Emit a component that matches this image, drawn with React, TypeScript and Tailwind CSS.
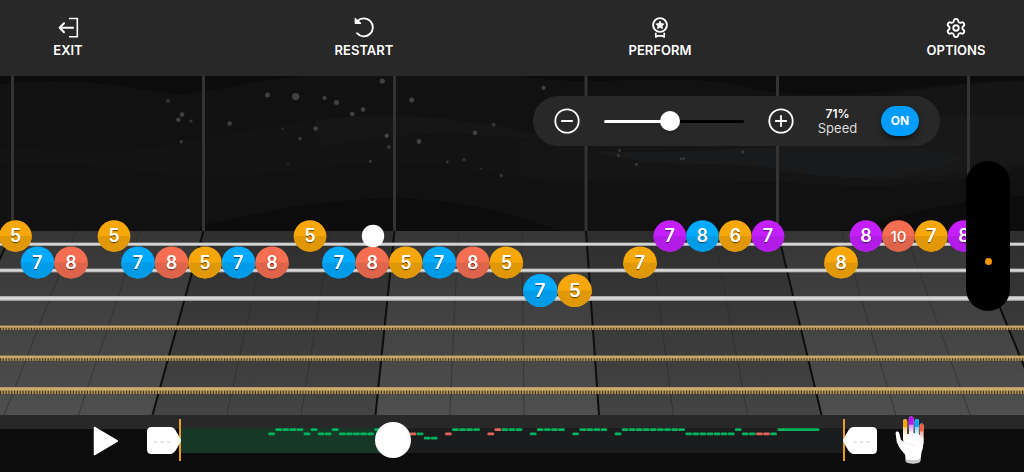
import { useState } from "react";
import type { ReactNode } from "react";
import { Settings } from "lucide-react";

type NoteColor = "yellow" | "blue" | "red" | "purple";

interface Note {
  x: number;
  row: 0 | 1 | 2;
  fret: number;
  color: NoteColor;
}

const COLORS: Record<NoteColor, { top: string; bottom: string }> = {
  yellow: { top: "#f7a70a", bottom: "#e09806" },
  blue: { top: "#00abff", bottom: "#009be6" },
  red: { top: "#f66e51", bottom: "#de644b" },
  purple: { top: "#c61fff", bottom: "#b31ce6" },
};

const ROWS = [
  { y: 160, rx: 16.3, ry: 15.7, size: 18 },
  { y: 186.5, rx: 16.8, ry: 15.9, size: 18 },
  { y: 214.5, rx: 17.2, ry: 16.4, size: 19 },
];

const NOTES: Note[] = [
  { x: 15.5, row: 0, fret: 5, color: "yellow" },
  { x: 114, row: 0, fret: 5, color: "yellow" },
  { x: 310, row: 0, fret: 5, color: "yellow" },
  { x: 669.8, row: 0, fret: 7, color: "purple" },
  { x: 702.5, row: 0, fret: 8, color: "blue" },
  { x: 735.2, row: 0, fret: 6, color: "yellow" },
  { x: 768, row: 0, fret: 7, color: "purple" },
  { x: 866, row: 0, fret: 8, color: "purple" },
  { x: 898.5, row: 0, fret: 10, color: "red" },
  { x: 931.2, row: 0, fret: 7, color: "yellow" },
  { x: 964, row: 0, fret: 8, color: "purple" },
  { x: 37.5, row: 1, fret: 7, color: "blue" },
  { x: 71, row: 1, fret: 8, color: "red" },
  { x: 138, row: 1, fret: 7, color: "blue" },
  { x: 171.5, row: 1, fret: 8, color: "red" },
  { x: 205, row: 1, fret: 5, color: "yellow" },
  { x: 238.5, row: 1, fret: 7, color: "blue" },
  { x: 272, row: 1, fret: 8, color: "red" },
  { x: 339, row: 1, fret: 7, color: "blue" },
  { x: 372.3, row: 1, fret: 8, color: "red" },
  { x: 405.8, row: 1, fret: 5, color: "yellow" },
  { x: 439.3, row: 1, fret: 7, color: "blue" },
  { x: 472.8, row: 1, fret: 8, color: "red" },
  { x: 506.3, row: 1, fret: 5, color: "yellow" },
  { x: 640, row: 1, fret: 7, color: "yellow" },
  { x: 841, row: 1, fret: 8, color: "yellow" },
  { x: 540.3, row: 2, fret: 7, color: "blue" },
  { x: 574.7, row: 2, fret: 5, color: "yellow" },
];

const DUST = [
  [168, 25, 2], [182, 38.5, 2.3], [178.3, 43.7, 2.2], [191, 45, 1.6], [181.3, 65.7, 1.9],
  [229.7, 47.5, 2.3], [267.5, 19, 2.5], [295.7, 20.6, 3.6], [324.5, 22, 2.1], [336.5, 26.5, 2.5],
  [382.3, 5, 2.6], [411.7, 24, 2.5], [352.3, 38, 2.3], [363, 33.5, 2.3], [315.7, 52.5, 2.2],
  [300, 62.7, 1.9], [282.5, 52.5, 1], [386.7, 59.7, 2.2], [388.7, 71, 2], [419, 65.5, 2.4],
  [475, 56.8, 2.2], [493.7, 48.7, 2], [370.3, 85.4, 1.7], [288, 88.5, 0.9], [447.3, 86, 1.4],
  [464, 83.5, 1.6], [481.3, 92.5, 1], [501.3, 99.5, 1.7], [543.5, 11.8, 2.1], [619.7, 74.5, 1.4],
  [618.3, 79.5, 1.4], [636.3, 88.3, 1.6], [681, 82.8, 1.5], [684, 82.5, 1.3], [742.7, 76, 1.7],
];

const TOP_X = [12.5, 203.5, 394.5, 586, 777.5, 968.5];
const BOTTOM_X = [-70, 152.5, 375.5, 599, 821.5, 1044];

// [slot, row, count, missed]
const SONG_MAP: [number, number, number, boolean?][] = [
  [0, 1, 1], [1, 0, 4], [5, 1, 1], [6, 0, 1], [7, 1, 2], [9, 0, 1], [10, 1, 5], [15, 0, 1],
  [20, 1, 1, true], [21, 1, 1], [22, 2, 2], [25, 1, 1, true], [26, 0, 4], [31, 1, 1, true],
  [32, 0, 1, true], [33, 0, 3], [37, 1, 1], [38, 0, 4], [43, 1, 1], [44, 0, 4], [49, 1, 1],
  [50, 0, 9], [59, 1, 7], [66, 0, 1], [67, 1, 2], [69, 1, 2, true], [71, 1, 1],
];

function HeaderButton({ label, children }: { label: string; children: ReactNode }) {
  return (
    <button type="button" className="flex w-24 flex-col items-center text-[13px] leading-5 font-semibold">
      <span className="flex h-6 w-6 items-center justify-center">{children}</span>
      {label}
    </button>
  );
}

function Wound({ y, h }: { y: number; h: number }) {
  return (
    <g>
      <rect x="0" y={y} width="1024" height={h} fill="#b8975d" />
      <rect x="0" y={y + h * 0.15} width="1024" height={h * 0.25} fill="#cdb077" />
      <line
        x1="0"
        x2="1024"
        y1={y + h * 0.76}
        y2={y + h * 0.76}
        stroke="#3f3521"
        strokeWidth={h * 0.48}
        strokeDasharray="1.2 1.6"
      />
    </g>
  );
}

function Fretboard() {
  const lanes = TOP_X.slice(0, -1).map((x, i) => ({
    points: `${x},155 ${TOP_X[i + 1]},155 ${BOTTOM_X[i + 1]},339 ${BOTTOM_X[i]},339`,
    light: i % 2 === 0,
  }));

  return (
    <svg viewBox="0 0 1024 339" className="block h-auto w-full" role="img" aria-label="Note highway">
      <defs>
        <linearGradient id="laneLight" x1="0" y1="155" x2="0" y2="339" gradientUnits="userSpaceOnUse">
          <stop offset="0" stopColor="#363636" />
          <stop offset="1" stopColor="#4f4f4f" />
        </linearGradient>
        <linearGradient id="laneDark" x1="0" y1="155" x2="0" y2="339" gradientUnits="userSpaceOnUse">
          <stop offset="0" stopColor="#2e2e2e" />
          <stop offset="1" stopColor="#444444" />
        </linearGradient>
        <linearGradient id="steel" x1="0" y1="0" x2="0" y2="1">
          <stop offset="0" stopColor="#9c9c9c" />
          <stop offset="0.35" stopColor="#dedede" />
          <stop offset="0.65" stopColor="#d2d2d2" />
          <stop offset="1" stopColor="#858585" />
        </linearGradient>
        <filter id="digitShadow" x="-30%" y="-30%" width="160%" height="180%">
          <feDropShadow dx="0" dy="1.2" stdDeviation="0.7" floodColor="#000" floodOpacity="0.5" />
        </filter>
      </defs>

      {/* Backdrop */}
      <rect width="1024" height="339" fill="#0c0c0c" />
      <path
        d="M0 8C60 1 110 7 178 19C230 13 270 0 320 0H520C600 14 680 -8 760 14C850 28 900 8 1024 4V120C960 122 900 140 840 155H560C430 105 330 120 200 150V155H0Z"
        fill="#111111"
      />
      <path
        d="M0 70C60 76 100 78 150 72C250 55 320 38 390 39C460 40 520 52 580 64V108C480 100 440 84 370 86C290 94 240 104 180 100C110 92 60 84 0 89Z"
        fill="#131313"
      />
      <path d="M315 45C380 35 460 40 540 60V66C450 50 380 60 321 71Z" fill="#161616" />
      <path
        d="M520 64C640 74 780 52 860 24C920 12 980 6 1024 5V92C940 112 860 112 780 106C660 104 600 108 520 99Z"
        fill="#151515"
      />
      <path d="M780 70C860 60 900 44 940 40C970 38 1000 38 1024 40V86C950 104 850 108 780 94Z" fill="#181818" />
      <path d="M595 75C660 78 720 74 780 70C860 66 920 68 966 82C930 100 850 108 780 94C720 82 660 96 595 75Z" fill="#191a1c" />
      {DUST.map(([x, y, r]) => (
        <circle key={`${x}-${y}`} cx={x} cy={y} r={r} fill="#6a6a6a" opacity={r > 2 ? 0.55 : 0.4} />
      ))}
      {TOP_X.map((x) => (
        <rect key={x} x={x - 1.5} y="0" width="3" height="155" fill="#333333" />
      ))}

      {/* Lanes */}
      <rect y="155" width="1024" height="184" fill="url(#laneDark)" />
      {lanes.map((lane) => (
        <polygon key={lane.points} points={lane.points} fill={lane.light ? "url(#laneLight)" : "url(#laneDark)"} />
      ))}
      {TOP_X.map((x, i) => (
        <g key={x}>
          {[1, 2].map((n) => (
            <line
              key={n}
              x1={x + n * 63.7}
              y1="155"
              x2={BOTTOM_X[i] + n * 74.3}
              y2="339"
              stroke="#2a2a2a"
              strokeWidth="0.8"
              opacity="0.75"
            />
          ))}
          <line x1={x} y1="155" x2={BOTTOM_X[i]} y2="339" stroke="#0d0d0d" strokeWidth="2" />
        </g>
      ))}

      {/* Strings */}
      <rect y="166.5" width="1024" height="3.5" fill="url(#steel)" />
      <rect y="192.5" width="1024" height="4" fill="url(#steel)" />
      <rect y="220" width="1024" height="5" fill="url(#steel)" />
      <Wound y={249.5} h={4.5} />
      <Wound y={279.5} h={5.3} />
      <Wound y={311} h={7} />

      {/* Notes */}
      {NOTES.map((note) => {
        const { y, rx, ry, size } = ROWS[note.row];
        const color = COLORS[note.color];
        return (
          <g key={`${note.x}-${note.row}`}>
            <ellipse cx={note.x} cy={y} rx={rx} ry={ry} fill={color.top} />
            <path d={`M${note.x - rx} ${y}A${rx} ${ry} 0 0 0 ${note.x + rx} ${y}Z`} fill={color.bottom} />
            <text
              x={note.x}
              y={y + 6}
              textAnchor="middle"
              fill="#fff"
              fontSize={note.fret > 9 ? 15 : size}
              fontWeight={note.fret > 9 ? 500 : 600}
              filter="url(#digitShadow)"
            >
              {note.fret}
            </text>
          </g>
        );
      })}
      <circle cx="373" cy="160" r="11.2" fill="#fff" />
    </svg>
  );
}

function SpeedControl() {
  const [speed, setSpeed] = useState(71);
  const [on, setOn] = useState(true);
  const progress = (speed - 10) / 130;

  return (
    <div className="absolute top-5 right-[84px] flex h-[50px] items-center rounded-full bg-[#282828] px-[21px]">
      <button type="button" aria-label="Slower" onClick={() => setSpeed(Math.max(10, speed - 1))}>
        <svg width="26" height="26" viewBox="0 0 26 26" fill="none" stroke="#fff" strokeWidth="1.8" strokeLinecap="round">
          <circle cx="13" cy="13" r="11.700" />
          <path d="M7.800 13h10.400" />
        </svg>
      </button>
      <div className="mx-3.5 grid w-[160px] items-center">
        <div className="col-start-1 row-start-1 mx-2.5 h-[3px] overflow-hidden rounded-full bg-black">
          <div className="h-full bg-white" style={{ width: `${progress * 100}%` }} />
        </div>
        <input
          type="range"
          aria-label="Speed"
          min={10}
          max={140}
          value={speed}
          onChange={(e) => setSpeed(Number(e.target.value))}
          className="col-start-1 row-start-1 h-5 w-full appearance-none bg-transparent [&::-webkit-slider-thumb]:h-5 [&::-webkit-slider-thumb]:w-5 [&::-webkit-slider-thumb]:appearance-none [&::-webkit-slider-thumb]:rounded-full [&::-webkit-slider-thumb]:bg-white [&::-webkit-slider-thumb]:shadow-md"
        />
      </div>
      <button type="button" aria-label="Faster" onClick={() => setSpeed(Math.min(140, speed + 1))}>
        <svg width="26" height="26" viewBox="0 0 26 26" fill="none" stroke="#fff" strokeWidth="1.8" strokeLinecap="round">
          <circle cx="13" cy="13" r="11.700" />
          <path d="M7.800 13h10.400M13 7.800v10.400" />
        </svg>
      </button>
      <div className="w-[87px] text-center text-[13px] leading-[15px] text-[#dcdcdc]">
        <div className="text-xs leading-[15px] font-semibold text-white">{speed}%</div>
        Speed
      </div>
      <button
        type="button"
        aria-pressed={on}
        onClick={() => setOn(!on)}
        className="h-[30px] w-[38px] rounded-full bg-[#009dff] text-xs font-bold text-white shadow-md shadow-black/50"
      >
        {on ? "ON" : "OFF"}
      </button>
    </div>
  );
}

function LoopMarker({ label, flip }: { label: string; flip?: boolean }) {
  return (
    <button type="button" aria-label={label} className={flip ? "z-10 -ml-0.5" : "z-10 -mr-0.5"}>
      <svg width="34" height="27" viewBox="0 0 34 27">
        <path
          d="M4.5 0H23C25.5 0 27 1.2 28.5 3.2L33.3 11.5C34 13 34 14 33.3 15.5L28.5 23.8C27 25.8 25.5 27 23 27H4.5C1.5 27 0 25.5 0 22.5V4.5C0 1.5 1.5 0 4.500 0Z"
          fill="#fff"
          transform={flip ? "translate(34 0) scale(-1 1)" : undefined}
        />
        <path
          d={
            flip
              ? "M10.500 14.600l1.500.8 1.500-.8M17 14.600l1.500.8 1.500-.8M23.500 14.600l1.500.8 1.500-.8"
              : "M7 14.600l1.500.8 1.500-.8M13.500 14.600l1.500.8 1.500-.8M20 14.600l1.500.8 1.500-.8"
          }
          fill="none"
          stroke="#c4c4c4"
          strokeWidth="1"
        />
      </svg>
    </button>
  );
}

function Timeline() {
  const [position, setPosition] = useState(31);

  return (
    <div className="grid h-[42px] flex-1 items-center border-x-2 border-[#e89c2c]">
      <div className="col-start-1 row-start-1 h-[25px] bg-[#1b1c1e]">
        <div className="h-full bg-[#173827]" style={{ width: `${position + 1}%` }} />
      </div>
      <svg
        viewBox="0 0 662 25"
        preserveAspectRatio="none"
        className="col-start-1 row-start-1 h-[25px] w-full"
        aria-hidden="true"
      >
        {SONG_MAP.flatMap(([slot, row, count, missed]) =>
          Array.from({ length: count }, (_, i) => (
            <rect
              key={slot + i}
              x={87.2 + (slot + i) * 7.07}
              y={0.3 + row * 4.2}
              width="6.8"
              height="2.7"
              rx="1.2"
              fill={missed ? "#e5645a" : "#00b35c"}
            />
          )),
        )}
        <rect x="596.5" y="0.3" width="42" height="2.7" rx="1.2" fill="#00b35c" />
      </svg>
      <input
        type="range"
        aria-label="Song position"
        min={0}
        max={100}
        value={position}
        onChange={(e) => setPosition(Number(e.target.value))}
        className="col-start-1 row-start-1 h-9 w-full appearance-none bg-transparent [&::-webkit-slider-thumb]:h-9 [&::-webkit-slider-thumb]:w-9 [&::-webkit-slider-thumb]:appearance-none [&::-webkit-slider-thumb]:rounded-full [&::-webkit-slider-thumb]:bg-white"
      />
    </div>
  );
}

function HandIcon() {
  const fingers = [
    { x: 8, y: 3.3, w: 4.2, color: "#f7a70a", id: "fingerYellow" },
    { x: 13.8, y: 0.6, w: 4.8, color: "#b915f5", id: "fingerPurple" },
    { x: 19.7, y: 3, w: 4.2, color: "#00abff", id: "fingerBlue" },
    { x: 24.7, y: 7.5, w: 3.8, color: "#f0613f", id: "fingerRed" },
  ];
  return (
    <svg width="30" height="48" viewBox="0 0 30 48">
      <defs>
        {fingers.map((f) => (
          <linearGradient key={f.id} id={f.id} x1="0" y1={f.y} x2="0" y2={f.y + 16} gradientUnits="userSpaceOnUse">
            <stop offset="0" stopColor={f.color} />
            <stop offset="0.48" stopColor={f.color} />
            <stop offset="0.52" stopColor={f.color} stopOpacity="0.5" />
            <stop offset="1" stopColor={f.color} stopOpacity="0.05" />
          </linearGradient>
        ))}
      </defs>
      <path
        d="M0.600 17.200C0.600 15 3.600 15 4.300 17.200L6 24L8.600 25.500L8 19.500L12.500 18L18.500 17L24 18.500L28.400 21C28.400 28 28.300 32 26.500 36.500L25.300 45C22 48 14 48 10.900 45L10 38.500C6.500 34.500 3.500 31 1.800 26Z"
        fill="#fff"
      />
      {fingers.map((f) => (
        <g key={f.id}>
          <rect x={f.x} y={f.y} width={f.w} height="22" rx={f.w / 2} fill="#fff" />
          <rect x={f.x} y={f.y} width={f.w} height="22" rx={f.w / 2} fill={`url(#${f.id})`} />
        </g>
      ))}
      <path d="M10.300 42.500C14 44.500 22 44.500 25.500 42.500L25 46C22 48.200 14 48.200 10.900 46Z" fill="#c9c9c9" />
      <path d="M9 27C13 26 15 29 21 29.500" fill="none" stroke="#e6e6e6" strokeWidth="0.800" />
    </svg>
  );
}

export default function App() {
  return (
    <div className="bg-[#0c0c0c] text-white select-none" style={{ fontFamily: 'Inter, "Open Sans", sans-serif' }}>
      {/* Header */}
      <header className="flex justify-between bg-[#282828] px-5 py-4">
        <HeaderButton label="EXIT">
          <svg width="24" height="24" viewBox="0 0 24 24" fill="none" stroke="#fff">
            <path d="M13 2.500h8.300v18.300H13" strokeWidth="1.600" />
            <path d="M17 11.800H4M8 7.300L3.700 11.800L8 16.300" strokeWidth="2" strokeLinecap="round" strokeLinejoin="round" />
          </svg>
        </HeaderButton>
        <HeaderButton label="RESTART">
          <svg width="24" height="24" viewBox="0 0 24 24" fill="none" stroke="#fff">
            <path d="M5.500 5A9 9 0 1 1 5 17.200" strokeWidth="1.900" strokeLinecap="round" />
            <path d="M3.200 2.400V7.300H8.600Z" fill="#fff" strokeWidth="1.200" strokeLinejoin="round" />
          </svg>
        </HeaderButton>
        <HeaderButton label="PERFORM">
          <svg width="24" height="24" viewBox="0 0 24 24" fill="none" stroke="#fff">
            <circle cx="12" cy="9" r="6.900" strokeWidth="1.900" />
            <path
              d="M12 5l1.300 2.500 2.800.4-2 2 .5 2.800-2.600-1.300-2.600 1.300.5-2.800-2-2 2.800-.4z"
              fill="#fff"
              strokeWidth="0.700"
              strokeLinejoin="round"
            />
            <path d="M7.800 16.800V21L10 19.800H14L16.200 21V16.800" strokeWidth="1.700" strokeLinejoin="round" />
          </svg>
        </HeaderButton>
        <HeaderButton label="OPTIONS">
          <Settings size={22} strokeWidth={2} />
        </HeaderButton>
      </header>

      {/* Note highway */}
      <main className="relative">
        <Fretboard />
        <SpeedControl />
        <div className="absolute top-[85px] right-3.5 flex h-[150px] w-11 items-center justify-center rounded-full bg-black pt-[50px]">
          <span className="h-[7px] w-[7px] rounded-full bg-[#f7960a]" />
        </div>
      </main>

      {/* Transport */}
      <footer className="flex items-center bg-[linear-gradient(#282828_14px,#0c0c0c_14px)] pt-px pr-[99px] pb-2 pl-[93px]">
        <button type="button" aria-label="Play" className="mr-7">
          <svg width="26" height="32" viewBox="0 0 26 32">
            <path d="M1.500 3.500L24.300 17L1.500 30.500Z" fill="#fff" stroke="#fff" strokeWidth="1.500" strokeLinejoin="round" />
          </svg>
        </button>
        <LoopMarker label="Loop start" />
        <Timeline />
        <LoopMarker label="Loop end" flip />
        <button type="button" aria-label="Finger colors" className="ml-[18px]">
          <HandIcon />
        </button>
      </footer>
    </div>
  );
}
